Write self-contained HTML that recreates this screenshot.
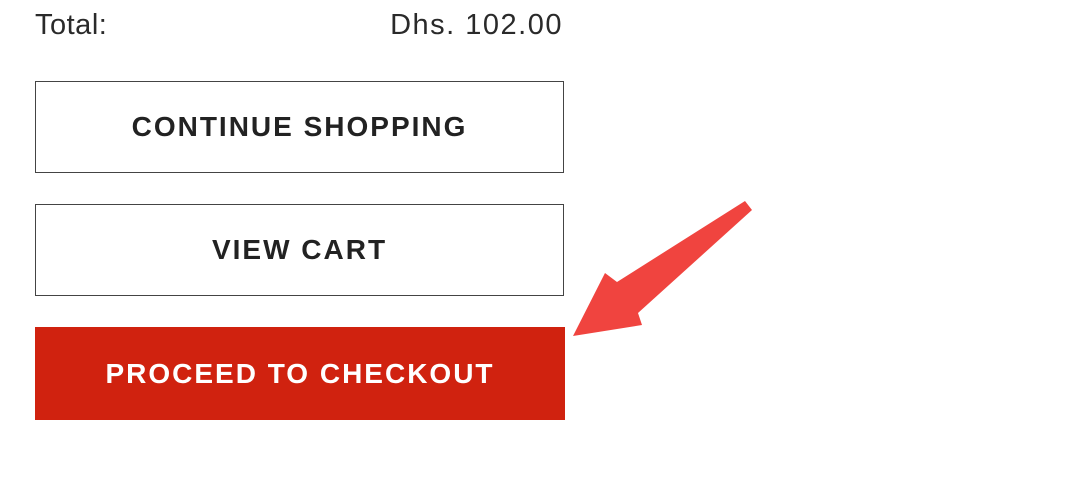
<!DOCTYPE html>
<html><head><style>
body{margin:0;width:1092px;height:484px;background:#fff;position:relative;overflow:hidden;font-family:"Liberation Sans",sans-serif;color:#222}
.t{position:absolute;top:9px;font-size:29px;color:#2a2a2a;letter-spacing:0.5px}
.b{position:absolute;left:35px;width:529px;border:1.5px solid #444;box-sizing:border-box;display:flex;align-items:center;justify-content:center;font-weight:bold;font-size:28px;letter-spacing:2px;color:#222}
</style></head><body>
<div class="t" style="left:35px">Total:</div>
<div class="t" style="right:529px;letter-spacing:1.5px">Dhs. 102.00</div>
<div class="b" style="top:81px;height:92px">CONTINUE SHOPPING</div>
<div class="b" style="top:204px;height:92px">VIEW CART</div>
<div class="b" style="top:327px;height:93px;width:530px;background:#d0220f;border:none;color:#fff;letter-spacing:2px">PROCEED TO CHECKOUT</div>
<svg style="position:absolute;left:0;top:0" width="1092" height="484">
<polygon points="745,201 752,210 638,313 642,325 573,336 605,273 617,282" fill="#f0443f"/>
</svg>
</body></html>
